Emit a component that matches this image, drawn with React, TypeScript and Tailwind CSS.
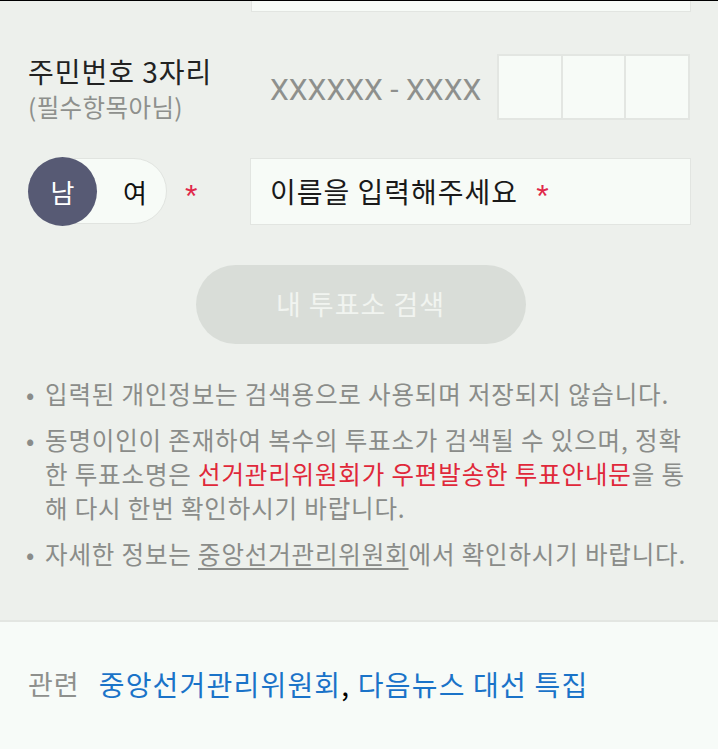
import React from "react";

const font = { fontFamily: '"Noto Sans CJK KR", "Noto Sans", sans-serif' };

export default function App() {
  return (
    <div className="w-[718px] h-[749px] overflow-hidden bg-[#edf0ec] flex flex-col" style={font}>
      <div className="h-px bg-black flex-shrink-0" />
      {/* 위쪽 입력칸 끝부분 */}
      <div className="ml-[251px] w-[440px] h-[11px] bg-[#f7fbf7] border border-t-0 border-[#e2e5e1] flex-shrink-0" />

      {/* 주민번호 */}
      <div className="flex items-start mt-[42px] pl-[28px] h-[66px]">
        <div className="w-[242px] flex flex-col">
          <p className="text-[28px] leading-[36px] text-[#222] tracking-[1px] -mt-[1px] whitespace-nowrap">주민번호 3자리</p>
          <p className="text-[24.5px] leading-[36px] text-[#8e908d] tracking-[0.4px] whitespace-nowrap">(필수항목아님)</p>
        </div>
        <span className="mt-[18px] text-[30px] leading-[36px] text-[#8e908d]" style={{ fontFamily: 'Roboto, "Noto Sans", sans-serif' }}>
          XXXXXX - XXXX
        </span>
        <div className="ml-auto mr-[28px] flex h-[66px] w-[193px] bg-[#e3e6e2] p-[2px] gap-[2px]">
          <div className="flex-1 bg-[#f7fbf7]" />
          <div className="flex-1 bg-[#f7fbf7]" />
          <div className="flex-1 bg-[#f7fbf7]" />
        </div>
      </div>

      {/* 성별 / 이름 */}
      <div className="flex items-center mt-[37px] pl-[28px] h-[68px]">
        <div className="relative w-[139px] h-[66px] rounded-full bg-[#f7fbf7] border border-[#e1e4e0] flex items-center">
          <div className="absolute -left-px -top-[2px] w-[69px] h-[69px] rounded-full bg-[#575a74] flex items-center justify-center">
            <span className="text-[26px] text-white">남</span>
          </div>
          <span className="ml-[94px] text-[26px] text-[#111]">여</span>
        </div>
        <span className="ml-[18px] text-[32px] text-[#e0284a] mt-[10px]" style={{ fontFamily: '"Liberation Sans", sans-serif' }}>*</span>
        <div className="ml-auto mr-[27px] w-[441px] h-[67px] bg-[#f7fbf7] border border-[#e2e5e1] flex items-center pl-[19px]">
          <span className="text-[28px] text-[#1a1a1a] tracking-[1px]">이름을 입력해주세요</span>
          <span className="ml-[18px] text-[32px] text-[#e0284a] mt-[10px]" style={{ fontFamily: '"Liberation Sans", sans-serif' }}>*</span>
        </div>
      </div>

      {/* 검색 버튼 */}
      <div className="mt-[40px] flex justify-center pl-[3px]">
        <button className="w-[330px] h-[79px] rounded-full bg-[#d9ddd8] text-[27px] text-[#f1f4f0] tracking-[1px]">
          내 투표소 검색
        </button>
      </div>

      {/* 안내 문구 */}
      <ul className="mt-[33px] pl-[26px] text-[24.5px] leading-[34px] text-[#8a8c89] tracking-[0.85px] flex flex-col gap-[12px]">
        <li className="flex">
          <span className="w-[19px] flex-shrink-0 tracking-normal">•</span>
          <span className="whitespace-nowrap">입력된 개인정보는 검색용으로 사용되며 저장되지 않습니다.</span>
        </li>
        <li className="flex">
          <span className="w-[19px] flex-shrink-0 tracking-normal">•</span>
          <span className="whitespace-nowrap">
            동명이인이 존재하여 복수의 투표소가 검색될 수 있으며, 정확
            <br />
            한 투표소명은 <span className="text-[#e0283a]">선거관리위원회가 우편발송한 투표안내문</span>을 통
            <br />
            해 다시 한번 확인하시기 바랍니다.
          </span>
        </li>
        <li className="flex">
          <span className="w-[19px] flex-shrink-0 tracking-normal">•</span>
          <span className="whitespace-nowrap">
            자세한 정보는 <span className="underline underline-offset-[4px]">중앙선거관리위원회</span>에서 확인하시기 바랍니다.
          </span>
        </li>
      </ul>

      {/* 관련 링크 */}
      <div className="mt-auto h-[129px] flex-shrink-0 bg-[#f7fbf8] border-t-2 border-[#e3e6e2] flex items-center pl-[28px] pb-[3px]">
        <span className="text-[27px] text-[#8e908d] tracking-[1px]">관련</span>
        <span className="ml-[19px] text-[28px] text-[#1a73c8] tracking-[1.2px]">
          중앙선거관리위원회<span className="text-black">,</span> 다음뉴스 대선 특집
        </span>
      </div>
    </div>
  );
}
